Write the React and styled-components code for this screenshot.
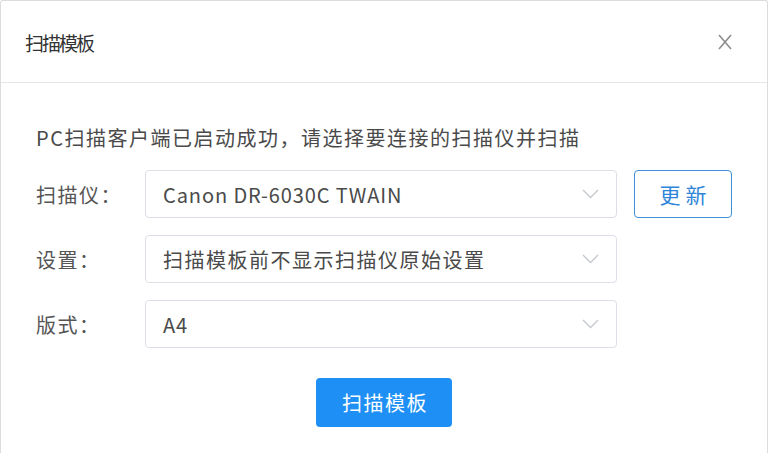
import React from "react";
import styled, { createGlobalStyle } from "styled-components";

const Global = createGlobalStyle`
  html, body { margin: 0; padding: 0; background: #fff; }
  body { font-family: "Noto Sans CJK SC", "Noto Sans", sans-serif; }
`;

const Dialog = styled.div`
  box-sizing: border-box;
  width: 768px;
  height: 453px;
  background: #fff;
  border: 1px solid #dcdcdc;
  border-bottom: none;
  border-radius: 3px 3px 0 0;
  display: flex;
  flex-direction: column;
`;

const Header = styled.div`
  height: 81px;
  border-bottom: 1px solid #e6e6e6;
  display: flex;
  align-items: center;
  justify-content: space-between;
  padding: 0 34px 0 24px;
`;

const Title = styled.div`
  font-size: 19px;
  letter-spacing: -2px;
  color: #333;
  line-height: 26px;
  margin-top: 2px;
`;

const Close = styled.button`
  border: none;
  background: none;
  padding: 0;
  width: 16px;
  height: 16px;
  display: flex;
  cursor: pointer;
`;

const Body = styled.div`
  padding: 43px 0 0 35px;
  display: flex;
  flex-direction: column;
`;

const Info = styled.div`
  font-size: 20px;
  letter-spacing: 1.5px;
  line-height: 24px;
  color: #4a4a4a;
  margin-bottom: 20px;
`;

const Rows = styled.div`
  display: flex;
  flex-direction: column;
  gap: 17px;
`;

const Row = styled.div`
  display: flex;
  align-items: center;
  height: 48px;
`;

const Label = styled.div`
  width: 109px;
  font-size: 20px;
  letter-spacing: 1.5px;
  color: #555;
`;

const Select = styled.div`
  box-sizing: border-box;
  width: 472px;
  height: 48px;
  border: 1px solid #dcdfe6;
  border-radius: 4px;
  display: flex;
  align-items: center;
  justify-content: space-between;
  padding: 0 17px 0 17px;
`;

const Value = styled.span`
  font-size: 20px;
  letter-spacing: ${(p) => (p.$latin ? "0.9px" : "1.5px")};
  color: #4a4a4a;
`;

const OutlineButton = styled.button`
  box-sizing: border-box;
  margin-left: 17px;
  width: 98px;
  height: 48px;
  border: 1px solid #3f8fd9;
  border-radius: 4px;
  background: #fff;
  color: #2f86d8;
  font-family: inherit;
  font-size: 21px;
  letter-spacing: 5px;
  padding: 0 0 0 5px;
`;

const Footer = styled.div`
  display: flex;
  justify-content: center;
  padding-top: 30px;
`;

const PrimaryButton = styled.button`
  box-sizing: border-box;
  width: 136px;
  height: 49px;
  border: none;
  border-radius: 4px;
  background: #1e90f5;
  color: #fff;
  font-family: inherit;
  font-size: 20px;
  letter-spacing: 1.5px;
  padding: 0 0 0 2px;
  margin-left: -35px;
`;

const Chevron = () => (
  <svg width="17" height="10" viewBox="0 0 17 10">
    <path d="M1 1 L8.5 8.5 L16 1" fill="none" stroke="#c4c7cc" strokeWidth="1.3" />
  </svg>
);

const CloseIcon = () => (
  <svg width="16" height="16" viewBox="0 0 16 16">
    <path d="M2 1 L14 15 M14 1 L2 15" stroke="#8c8c8c" strokeWidth="1.6" fill="none" />
  </svg>
);

export default function App() {
  return (
    <>
      <Global />
      <Dialog>
        <Header>
          <Title>扫描模板</Title>
          <Close aria-label="close">
            <CloseIcon />
          </Close>
        </Header>
        <Body>
          <Info>PC扫描客户端已启动成功，请选择要连接的扫描仪并扫描</Info>
          <Rows>
            <Row>
              <Label>扫描仪：</Label>
              <Select>
                <Value $latin>Canon DR-6030C TWAIN</Value>
                <Chevron />
              </Select>
              <OutlineButton>更新</OutlineButton>
            </Row>
            <Row>
              <Label>设置：</Label>
              <Select>
                <Value>扫描模板前不显示扫描仪原始设置</Value>
                <Chevron />
              </Select>
            </Row>
            <Row>
              <Label>版式：</Label>
              <Select>
                <Value $latin>A4</Value>
                <Chevron />
              </Select>
            </Row>
          </Rows>
          <Footer>
            <PrimaryButton>扫描模板</PrimaryButton>
          </Footer>
        </Body>
      </Dialog>
    </>
  );
}
